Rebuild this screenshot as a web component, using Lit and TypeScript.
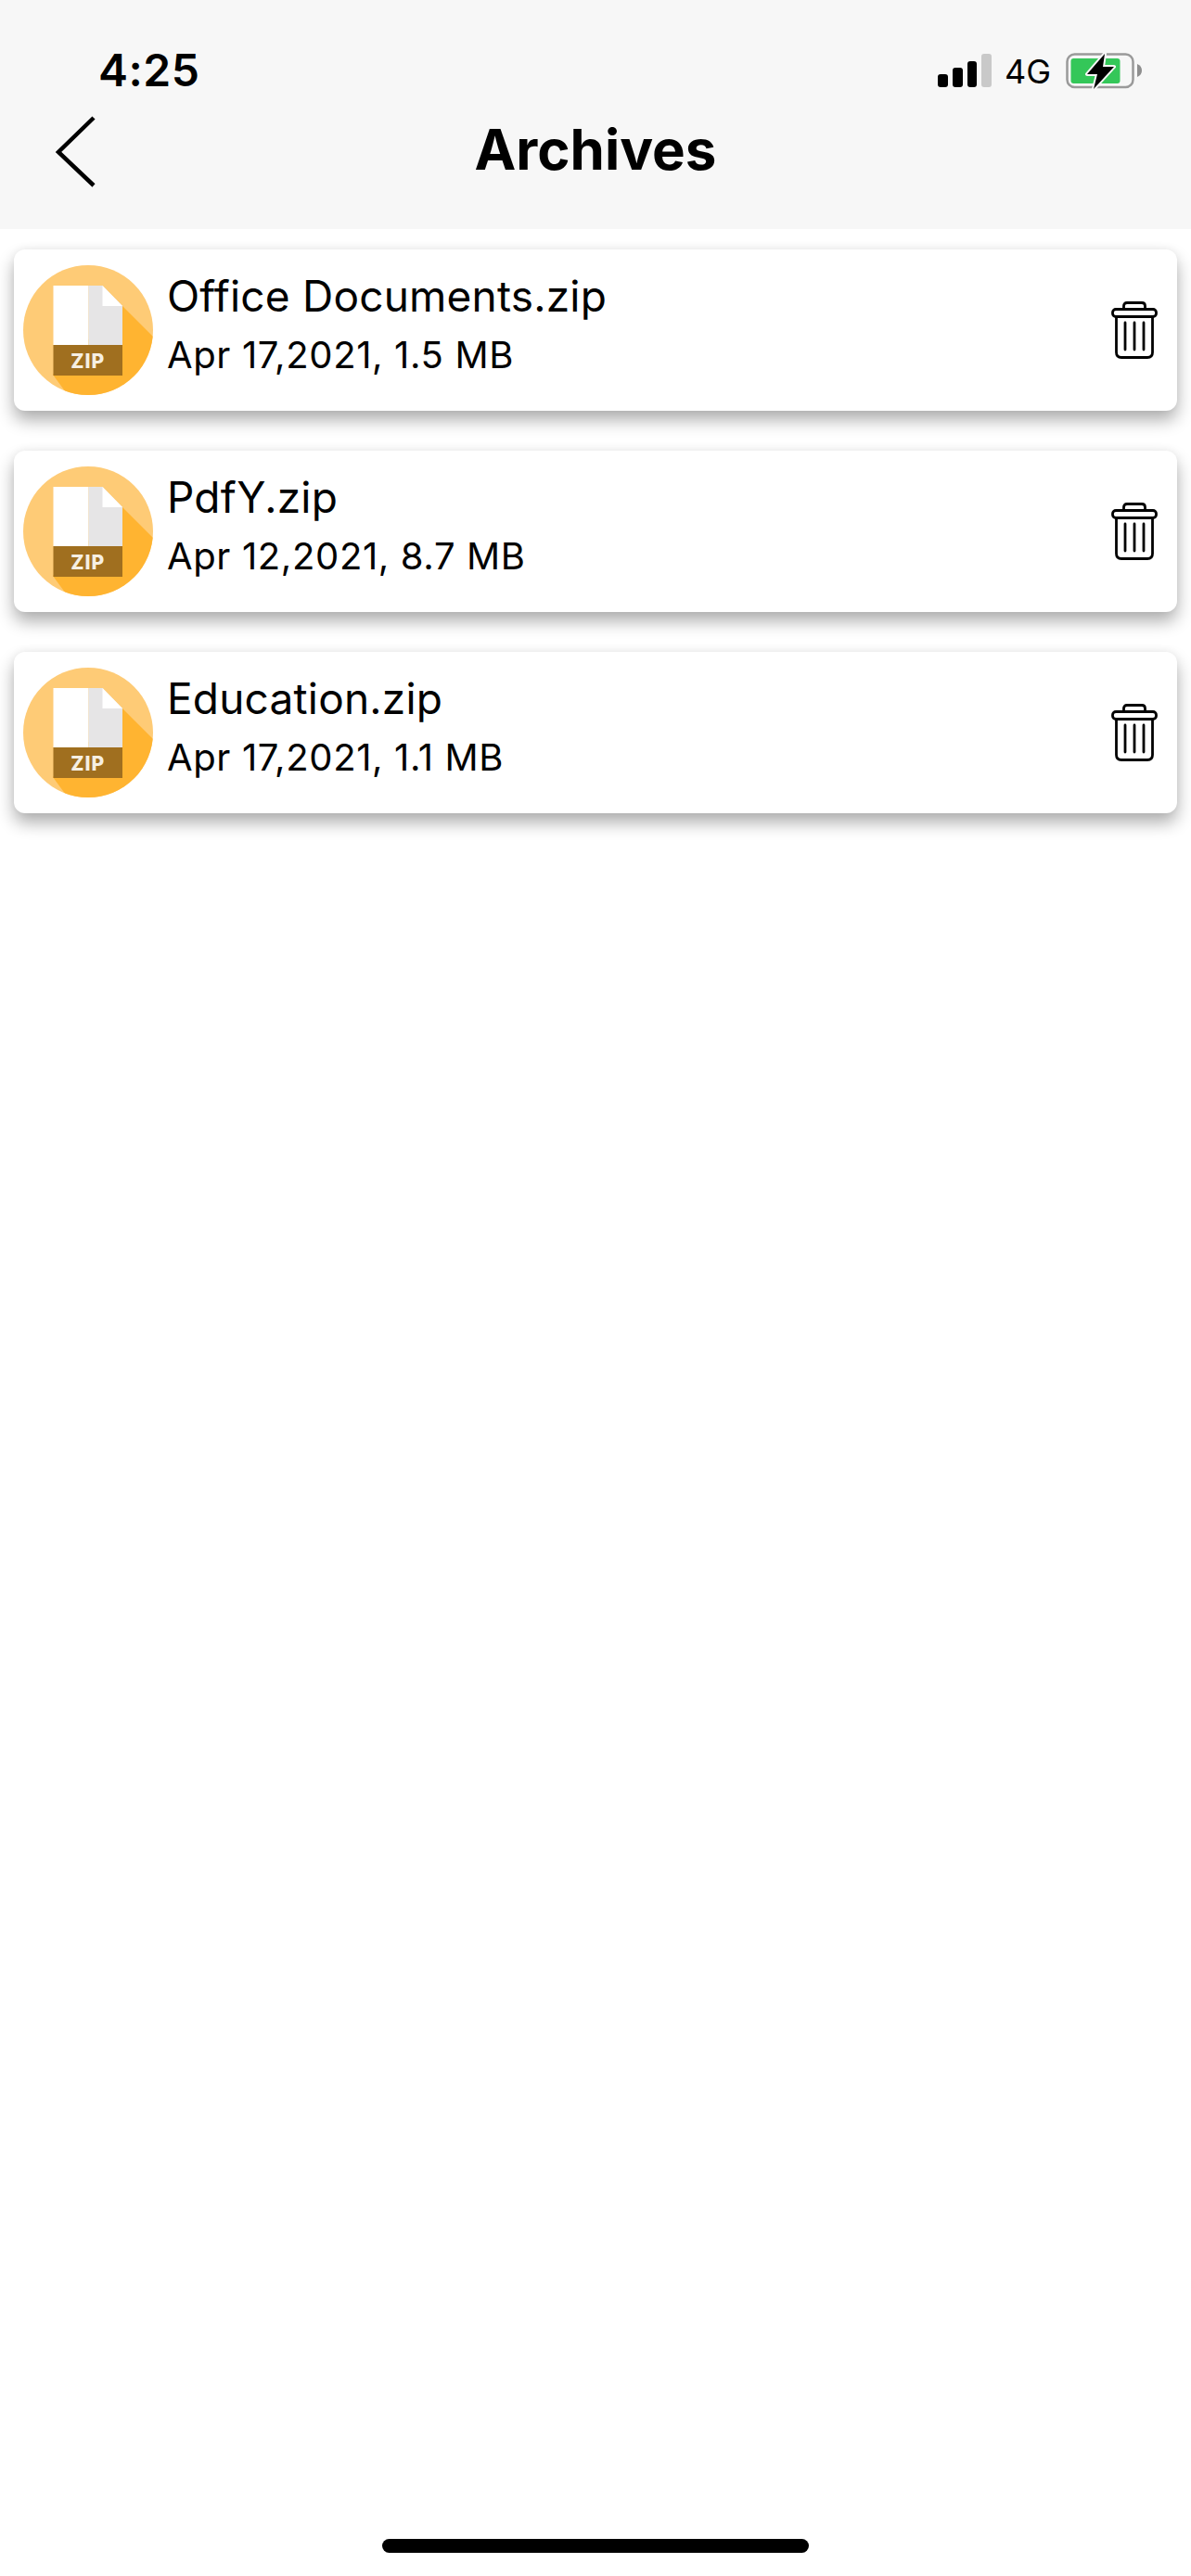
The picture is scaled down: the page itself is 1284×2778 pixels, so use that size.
import { LitElement, html, css, svg } from "lit";
import { customElement } from "lit/decorators.js";

const FILES = [
  { name: "Office Documents.zip", meta: "Apr 17,2021, 1.5 MB" },
  { name: "PdfY.zip", meta: "Apr 12,2021, 8.7 MB" },
  { name: "Education.zip", meta: "Apr 17,2021, 1.1 MB" },
];

const zipIcon = html`<svg class="zip" viewBox="0 0 140 140" aria-hidden="true">
  <defs><clipPath id="c"><circle cx="70" cy="70" r="70"></circle></clipPath></defs>
  <circle cx="70" cy="70" r="70" fill="#fecb76"></circle>
  <g clip-path="url(#c)">
    <path d="M107 44 L170 107 L170 170 L70 170 L32 118 Z" fill="#ffb431"></path>
  </g>
  <path d="M32.500 22 H70.500 V86 H32.500 Z" fill="#ffffff"></path>
  <path d="M70.500 22 H85.500 L107 44 V86 H70.500 Z" fill="#e6e5e6"></path>
  <path d="M85.500 22 L107 44 H85.500 Z" fill="#ffffff"></path>
  <rect x="32.500" y="86" width="74.500" height="33" fill="#a06f1f"></rect>
  <text x="69.800" y="110.500" text-anchor="middle" class="ziptext">ZIP</text>
</svg>`;

const trashIcon = html`<svg class="trash" viewBox="0 0 50 62" fill="none" stroke="#000" aria-hidden="true">
  <path d="M13.500 8 V5 Q13.500 1.500 17 1.500 H33 Q36.500 1.500 36.500 5 V8" stroke-width="2.800"></path>
  <rect x="1.500" y="8.500" width="47" height="8" rx="3.500" stroke-width="2.800"></rect>
  <path d="M5.500 16.500 V55 Q5.500 60.500 11 60.500 H39 Q44.500 60.500 44.500 55 V16.500" stroke-width="2.800"></path>
  <path d="M15 23 V52 M25 23 V52 M35 23 V52" stroke-width="2.800" stroke-linecap="round"></path>
</svg>`;

const batteryIcon = svg`<svg class="battery" viewBox="0 0 82 40" aria-hidden="true">
  <rect x="1.500" y="1.500" width="71" height="35.500" rx="8" fill="none" stroke="#9a9a9a" stroke-width="2.500"></rect>
  <path d="M77 12 Q82 14 82 19 Q82 24 77 26 Z" fill="#8f8f8f"></path>
  <rect x="5.500" y="6" width="53" height="27" rx="3" fill="#34c759"></rect>
  <path d="M42 1 L23 23 H34 L30 39 L52 15 H40 L42 1 Z" fill="#000" stroke="#f7f7f7" stroke-width="4" paint-order="stroke" stroke-linejoin="round"></path>
</svg>`;

@customElement("app-root")
export class AppRoot extends LitElement {
  static styles = css`
    :host {
      display: flex;
      flex-direction: column;
      width: 1284px;
      height: 2778px;
      background: #fff;
      font-family: Inter, "Liberation Sans", sans-serif;
      color: #000;
      overflow: hidden;
    }
    .header {
      background: #f7f7f7;
      height: 247px;
      flex: none;
      display: flex;
      flex-direction: column;
    }
    .status {
      height: 104px;
      display: flex;
      justify-content: space-between;
      padding: 50px 53px 0 106px;
      box-sizing: border-box;
    }
    .time {
      font-size: 48px;
      font-weight: 600;
      line-height: 52px;
      letter-spacing: 0.5px;
    }
    .indicators {
      display: flex;
      align-items: flex-start;
      margin-top: 7px;
    }
    .signal {
      width: 58px;
      height: 36px;
      display: flex;
      align-items: flex-end;
      gap: 5px;
      margin-top: 1px;
    }
    .signal i {
      display: block;
      width: 11px;
      background: #000;
      border-radius: 3px;
    }
    .signal i:nth-child(1) { height: 14px; }
    .signal i:nth-child(2) { height: 21px; }
    .signal i:nth-child(3) { height: 28px; }
    .signal i:nth-child(4) { height: 36px; background: #c9c9c9; }
    .net {
      font-size: 36px;
      line-height: 40px;
      width: 50px;
      margin: 0 16px 0 14px;
      white-space: nowrap;
    }
    .battery {
      width: 82px;
      height: 40px;
      display: block;
    }
    .nav {
      position: relative;
      height: 143px;
      display: flex;
      align-items: flex-start;
      justify-content: center;
    }
    .back {
      position: absolute;
      left: 58px;
      top: 20px;
      width: 46px;
      height: 78px;
    }
    .title {
      font-size: 60px;
      font-weight: 700;
      line-height: 72px;
      margin-top: 21px;
    }
    .list {
      display: flex;
      flex-direction: column;
      gap: 43px;
      padding: 22px 15px 0;
    }
    .card {
      height: 174px;
      box-sizing: border-box;
      background: #fff;
      border-radius: 12px;
      box-shadow: 0 10px 18px rgba(0, 0, 0, 0.32), 0 -2px 8px rgba(0, 0, 0, 0.04);
      display: flex;
      align-items: center;
      padding: 0 21px 0 10px;
    }
    .zip {
      width: 140px;
      height: 140px;
      flex: none;
      display: block;
    }
    .ziptext {
      font-family: Inter, "Liberation Sans", sans-serif;
      font-size: 21px;
      font-weight: 800;
      fill: #f6efe2;
      letter-spacing: 1px;
    }
    .text {
      flex: 1;
      margin: 0 0 14px 15px;
      display: flex;
      flex-direction: column;
    }
    .name {
      font-size: 46px;
      line-height: 56px;
      letter-spacing: 0.2px;
    }
    .meta {
      font-size: 40px;
      line-height: 48px;
      margin-top: 12px;
      letter-spacing: 0.63px;
    }
    .trash {
      width: 50px;
      height: 62px;
      flex: none;
      display: block;
    }
    .home {
      width: 460px;
      height: 15px;
      border-radius: 8px;
      background: #000;
      margin: auto auto 25px;
      flex: none;
    }
  `;

  render() {
    return html`
      <div class="header">
        <div class="status">
          <div class="time">4:25</div>
          <div class="indicators">
            <div class="signal"><i></i><i></i><i></i><i></i></div>
            <div class="net">4G</div>
            ${batteryIcon}
          </div>
        </div>
        <div class="nav">
          <svg class="back" viewBox="0 0 46 78" fill="none" stroke="#000" stroke-width="4.500" aria-hidden="true">
            <path d="M43 3 L5 40 L43 76"></path>
          </svg>
          <div class="title">Archives</div>
        </div>
      </div>
      <div class="list">
        ${FILES.map(
          (f) => html`<div class="card">
            ${zipIcon}
            <div class="text">
              <div class="name">${f.name}</div>
              <div class="meta">${f.meta}</div>
            </div>
            ${trashIcon}
          </div>`
        )}
      </div>
      <div class="home"></div>
    `;
  }
}
